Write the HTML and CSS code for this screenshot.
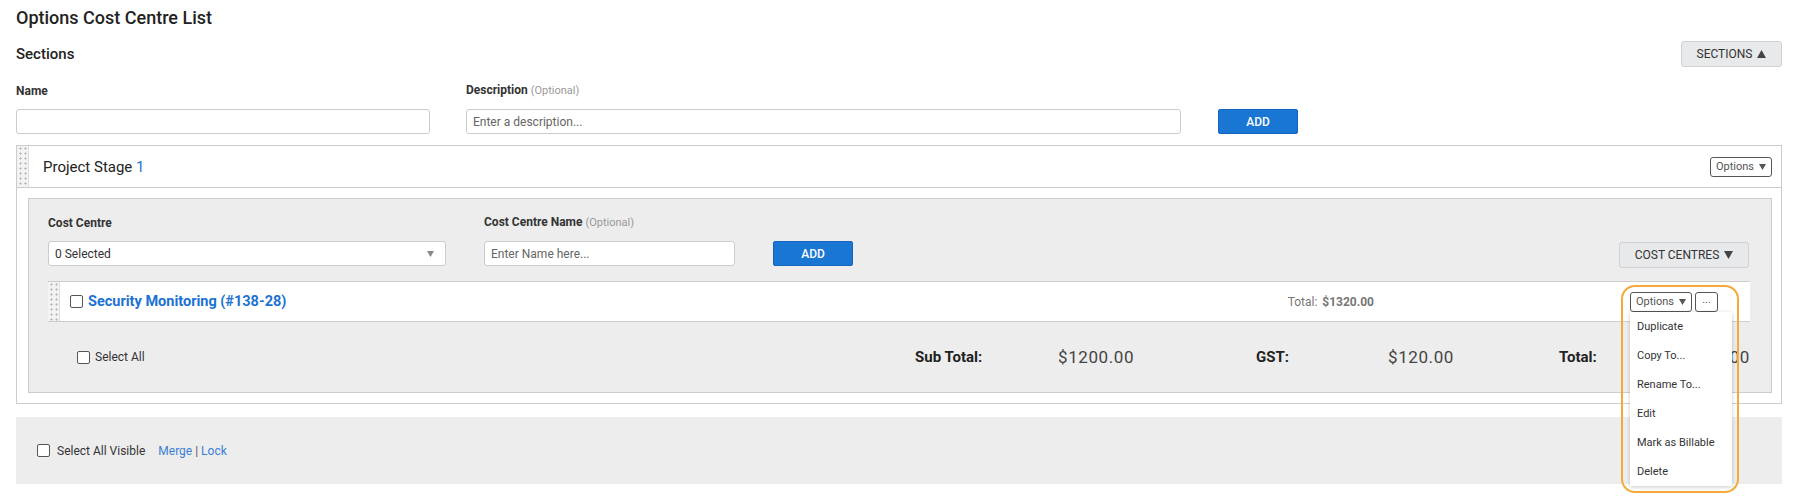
FILE: index.html
```html
<!DOCTYPE html>
<html lang="en">
<head>
<meta charset="utf-8">
<title>Options Cost Centre List</title>
<link rel="stylesheet" href="styles.css">
</head>
<body>
<div class="page">
  <h1 class="title">Options Cost Centre List</h1>

  <div class="section-bar">
    <h2 class="subtitle">Sections</h2>
    <button class="toggle-btn sections-btn">SECTIONS <svg class="tri" width="9" height="8" viewBox="0 0 9 8"><polygon points="4.5,0 9,8 0,8" fill="#444"/></svg></button>
  </div>

  <div class="add-form">
    <div class="field name-field">
      <label class="lbl">Name</label>
      <input class="txt" type="text">
    </div>
    <div class="field desc-field">
      <label class="lbl">Description <span class="opt">(Optional)</span></label>
      <input class="txt" type="text" placeholder="Enter a description...">
    </div>
    <button class="add-btn">ADD</button>
  </div>

  <div class="stage">
    <div class="stage-head">
      <div class="grip"></div>
      <div class="stage-name">Project Stage <span class="blue">1</span></div>
      <button class="opt-btn">Options <svg width="7" height="6" viewBox="0 0 7 6"><polygon points="0,0 7,0 3.5,6" fill="#555"/></svg></button>
    </div>

    <div class="stage-body">
      <div class="cc-panel">
        <div class="cc-form">
          <div class="field cc-select-field">
            <label class="lbl">Cost Centre</label>
            <div class="select">
              <span>0 Selected</span>
              <svg width="7" height="6" viewBox="0 0 7 6"><polygon points="0,0 7,0 3.5,6" fill="#888"/></svg>
            </div>
          </div>
          <div class="field cc-name-field">
            <label class="lbl">Cost Centre Name <span class="opt">(Optional)</span></label>
            <input class="txt" type="text" placeholder="Enter Name here...">
          </div>
          <button class="add-btn">ADD</button>
          <button class="toggle-btn cc-btn">COST CENTRES <svg class="tri" width="9" height="8" viewBox="0 0 9 8"><polygon points="0,0 9,0 4.5,8" fill="#444"/></svg></button>
        </div>

        <div class="cc-item">
          <div class="grip"></div>
          <input class="chk item-chk" type="checkbox">
          <a class="item-link" href="#">Security Monitoring (#138-28)</a>
          <div class="item-total">Total: <b>$1320.00</b></div>
          <div class="actions">
            <button class="opt-btn">Options <svg width="7" height="6" viewBox="0 0 7 6"><polygon points="0,0 7,0 3.5,6" fill="#555"/></svg></button>
            <button class="more-btn">...</button>
            <ul class="menu">
              <li>Duplicate</li>
              <li>Copy To...</li>
              <li>Rename To...</li>
              <li>Edit</li>
              <li>Mark as Billable</li>
              <li>Delete</li>
            </ul>
            <div class="highlight"></div>
          </div>
        </div>

        <div class="cc-foot">
          <label class="check-label"><input class="chk" type="checkbox"> Select All</label>
          <span class="sum-lbl">Sub Total:</span>
          <span class="sum-val">$1200.00</span>
          <span class="sum-lbl">GST:</span>
          <span class="sum-val">$120.00</span>
          <span class="sum-lbl">Total:</span>
          <span class="sum-val sum-last">$1320.00</span>
        </div>
      </div>
    </div>
  </div>

  <div class="bulk-bar">
    <label class="check-label bulk-check"><input class="chk" type="checkbox"> Select All Visible</label>
    <span class="bulk-links"><a href="#">Merge</a> | <a href="#">Lock</a></span>
  </div>
</div>
</body>
</html>
```

FILE: styles.css
```css
* { box-sizing: border-box; }

body {
  margin: 0;
  font-family: Roboto, "Liberation Sans", Arial, sans-serif;
  color: #333;
  background: #fff;
}

.page {
  padding: 8px 20px 15px 16px;
}

.title {
  margin: 0;
  font-size: 18px;
  line-height: 20px;
  font-weight: 500;
  color: #222;
}

.section-bar {
  display: flex;
  justify-content: space-between;
  align-items: center;
  margin-top: 13px;
  height: 26px;
}

.subtitle {
  margin: 0;
  font-size: 15px;
  line-height: 20px;
  font-weight: 500;
  color: #222;
}

.toggle-btn {
  display: inline-flex;
  align-items: center;
  justify-content: center;
  gap: 5px;
  height: 26px;
  padding: 0;
  background: #e8e9eb;
  border: 1px solid #cfd1d4;
  border-radius: 3px;
  font-family: inherit;
  font-size: 12px;
  color: #333;
}

.sections-btn { width: 101px; }

.tri { display: block; }

.add-form {
  display: flex;
  align-items: flex-end;
  margin-top: 16px;
}

.field {
  display: flex;
  flex-direction: column;
  gap: 11px;
}

.lbl {
  font-size: 12px;
  line-height: 14px;
  font-weight: 700;
  color: #333;
}

.opt {
  font-weight: 400;
  color: #999;
  font-size: 11px;
}

.txt {
  height: 25px;
  border: 1px solid #ccc;
  border-radius: 3px;
  padding: 0 6px;
  font-family: inherit;
  font-size: 12px;
  color: #333;
  background: #fff;
}

.txt::placeholder { color: #666; }

.name-field { width: 414px; margin-right: 36px; }
.desc-field { width: 715px; margin-right: 37px; }

.add-btn {
  width: 80px;
  height: 25px;
  padding: 0;
  background: #1976d2;
  border: 1px solid #1565c0;
  border-radius: 2px;
  color: #fff;
  font-family: inherit;
  font-size: 12px;
  font-weight: 500;
}

.stage {
  margin-top: 11px;
  border: 1px solid #ccc;
}

.stage-head {
  display: flex;
  align-items: center;
  height: 42px;
  border-bottom: 1px solid #ccc;
  padding-right: 9px;
}

.grip {
  align-self: stretch;
  width: 12px;
  flex: none;
  background-color: #f3f3f3;
  background-image: radial-gradient(circle, #b5b5b5 0.9px, transparent 1.2px);
  background-size: 5px 5px;
  background-position: 1px 0;
  border-right: 1px solid #ddd;
}

.stage-name {
  flex: 1;
  margin-left: 14px;
  font-size: 15px;
  color: #222;
}

.blue { color: #1c72d2; }

.opt-btn {
  display: inline-flex;
  align-items: center;
  justify-content: center;
  gap: 5px;
  width: 62px;
  height: 20px;
  padding: 0;
  background: #fff;
  border: 1px solid #555;
  border-radius: 3px;
  font-family: inherit;
  font-size: 11px;
  color: #555;
}

.stage-body {
  padding: 10px 9px 10px 11px;
}

.cc-panel {
  background: #ededed;
  border: 1px solid #ccc;
}

.cc-form {
  display: flex;
  align-items: flex-end;
  padding: 16px 22px 0 19px;
}

.cc-select-field { width: 398px; margin-right: 38px; }
.cc-name-field { width: 251px; margin-right: 38px; }

.select {
  display: flex;
  align-items: center;
  justify-content: space-between;
  height: 25px;
  padding: 0 11px 0 6px;
  background: #fff;
  border: 1px solid #ccc;
  border-radius: 3px;
  font-size: 12px;
  color: #333;
}

.cc-btn {
  width: 130px;
  margin-left: auto;
  margin-bottom: -2px;
}

.cc-item {
  display: flex;
  align-items: center;
  height: 41px;
  margin: 15px 21px 0 19px;
  background: #fff;
  border-top: 1px solid #ccc;
  border-bottom: 1px solid #ccc;
  padding-right: 32px;
}

.chk {
  appearance: none;
  -webkit-appearance: none;
  width: 13px;
  height: 13px;
  margin: 0;
  flex: none;
  border: 1px solid #555;
  border-radius: 2px;
  background: #fff;
}

.item-chk { margin-left: 10px; }

.item-link {
  flex: 1;
  margin-left: 5px;
  font-size: 14.5px;
  font-weight: 700;
  color: #1c72d2;
  text-decoration: none;
}

.item-total {
  margin-right: 256px;
  font-size: 12px;
  color: #777;
}

.item-total b { margin-left: 2px; }

.actions {
  position: relative;
  display: flex;
  gap: 3px;
}

.more-btn {
  width: 23px;
  height: 20px;
  padding: 0 0 4px;
  background: #fff;
  border: 1px solid #555;
  border-radius: 3px;
  font-family: inherit;
  font-size: 11px;
  color: #555;
}

.menu {
  position: absolute;
  top: 20px;
  left: 0;
  z-index: 2;
  width: 102px;
  margin: 0;
  padding: 0;
  list-style: none;
  background: #fff;
  box-shadow: 0 1px 4px rgba(0, 0, 0, 0.22);
}

.menu li {
  height: 29px;
  line-height: 29px;
  padding-left: 7px;
  font-size: 11px;
  color: #333;
}

.highlight {
  position: absolute;
  left: -9px;
  top: -7px;
  width: 118px;
  height: 208px;
  z-index: 3;
  border: 2px solid #f5a93a;
  border-radius: 14px;
  pointer-events: none;
}

.cc-foot {
  display: grid;
  grid-template-columns: 1fr 143px 198px 132px 171px 128px 84px;
  align-items: center;
  height: 70px;
  padding: 0 0 0 48px;
  font-size: 15px;
}

.check-label {
  display: flex;
  align-items: center;
  gap: 5px;
  font-size: 12px;
  color: #333;
}

.sum-lbl { font-weight: 700; color: #222; }
.sum-val { color: #444; font-size: 17px; letter-spacing: 0.6px; white-space: nowrap; }
.sum-last { justify-self: end; margin-right: 21px; }

.bulk-bar {
  display: flex;
  align-items: center;
  height: 67px;
  margin-top: 13px;
  padding-left: 21px;
  background: #ededed;
}

.bulk-check { gap: 7px; }

.bulk-links {
  margin-left: 13px;
  font-size: 12px;
  color: #555;
}

.bulk-links a {
  color: #3a7fd5;
  text-decoration: none;
}
```
